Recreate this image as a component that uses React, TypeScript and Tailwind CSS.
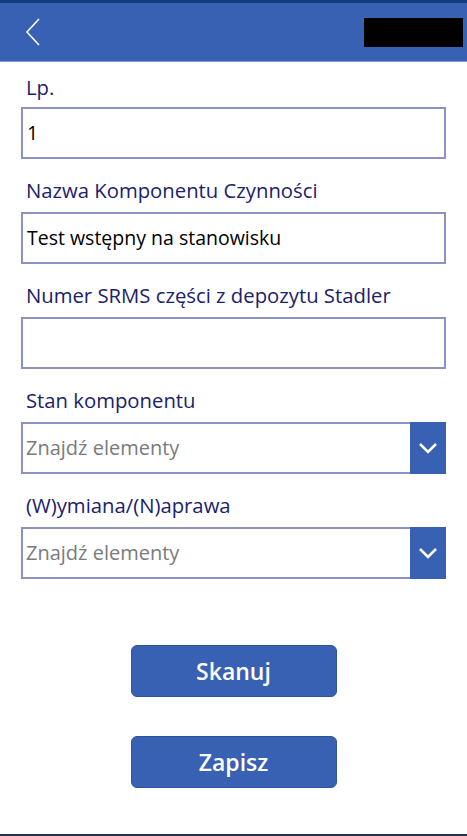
import React from "react";

const font = { fontFamily: '"Open Sans", "Noto Sans", sans-serif' };

const Label: React.FC<{ text: string }> = ({ text }) => (
  <div className="px-[26px] h-[53px] pt-[10px] flex items-center text-[20.3px] text-[#1b216b]">{text}</div>
);

const TextField: React.FC<{ value?: string }> = ({ value }) => (
  <div className="mx-[21px] h-[52px] border-2 border-[#8c92c2] flex items-center px-[4px] text-[19.5px] text-black">
    {value}
  </div>
);

const Dropdown: React.FC = () => (
  <div className="mx-[21px] h-[52px] border-2 border-[#8c92c2] flex">
    <div className="flex-1 flex items-center px-[3px] text-[20px] text-[#7b7b7b]">Znajdź elementy</div>
    <div className="w-[36px] -my-[2px] -mr-[2px] bg-[#3861b3] flex items-center justify-center">
      <svg width="20" height="12" viewBox="0 0 20 12" fill="none">
        <path d="M2 2 L10 10 L18 2" stroke="white" strokeWidth="2.5" />
      </svg>
    </div>
  </div>
);

const App: React.FC = () => {
  return (
    <div className="w-[467px] h-[836px] bg-white flex flex-col" style={font}>
      <div className="h-[3px] bg-[#0f3d7c]" />
      <div className="h-[58px] bg-[#3861b3] flex items-center justify-between pl-[25px] pr-[4px]">
        <svg width="16" height="28" viewBox="0 0 16 28" fill="none">
          <path d="M14 1 L2 14 L14 27" stroke="white" strokeWidth="1.6" />
        </svg>
        <div className="w-[99px] h-[29px] bg-black" />
      </div>
      <div className="h-[1px] bg-[#7d9bd4]" />
      <div className="flex flex-col">
        <div className="h-[45px] pt-[5px] flex items-center px-[26px] text-[20.3px] text-[#1b216b]">Lp.</div>
        <TextField value="1" />
        <Label text="Nazwa Komponentu Czynności" />
        <TextField value="Test wstępny na stanowisku" />
        <Label text="Numer SRMS części z depozytu Stadler" />
        <TextField />
        <Label text="Stan komponentu" />
        <Dropdown />
        <Label text="(W)ymiana/(N)aprawa" />
        <Dropdown />
      </div>
      <div className="flex flex-col items-center gap-[39px] mt-[66px]">
        <button className="w-[206px] h-[52px] rounded-[6px] bg-[#3861b3] border border-[#2f549e] text-white text-[23px] font-semibold">
          Skanuj
        </button>
        <button className="w-[206px] h-[52px] rounded-[6px] bg-[#3861b3] border border-[#2f549e] text-white text-[23px] font-semibold">
          Zapisz
        </button>
      </div>
      <div className="flex-1" />
      <div className="h-[2px] bg-[#1f2f5a]" />
    </div>
  );
};

export default App;
